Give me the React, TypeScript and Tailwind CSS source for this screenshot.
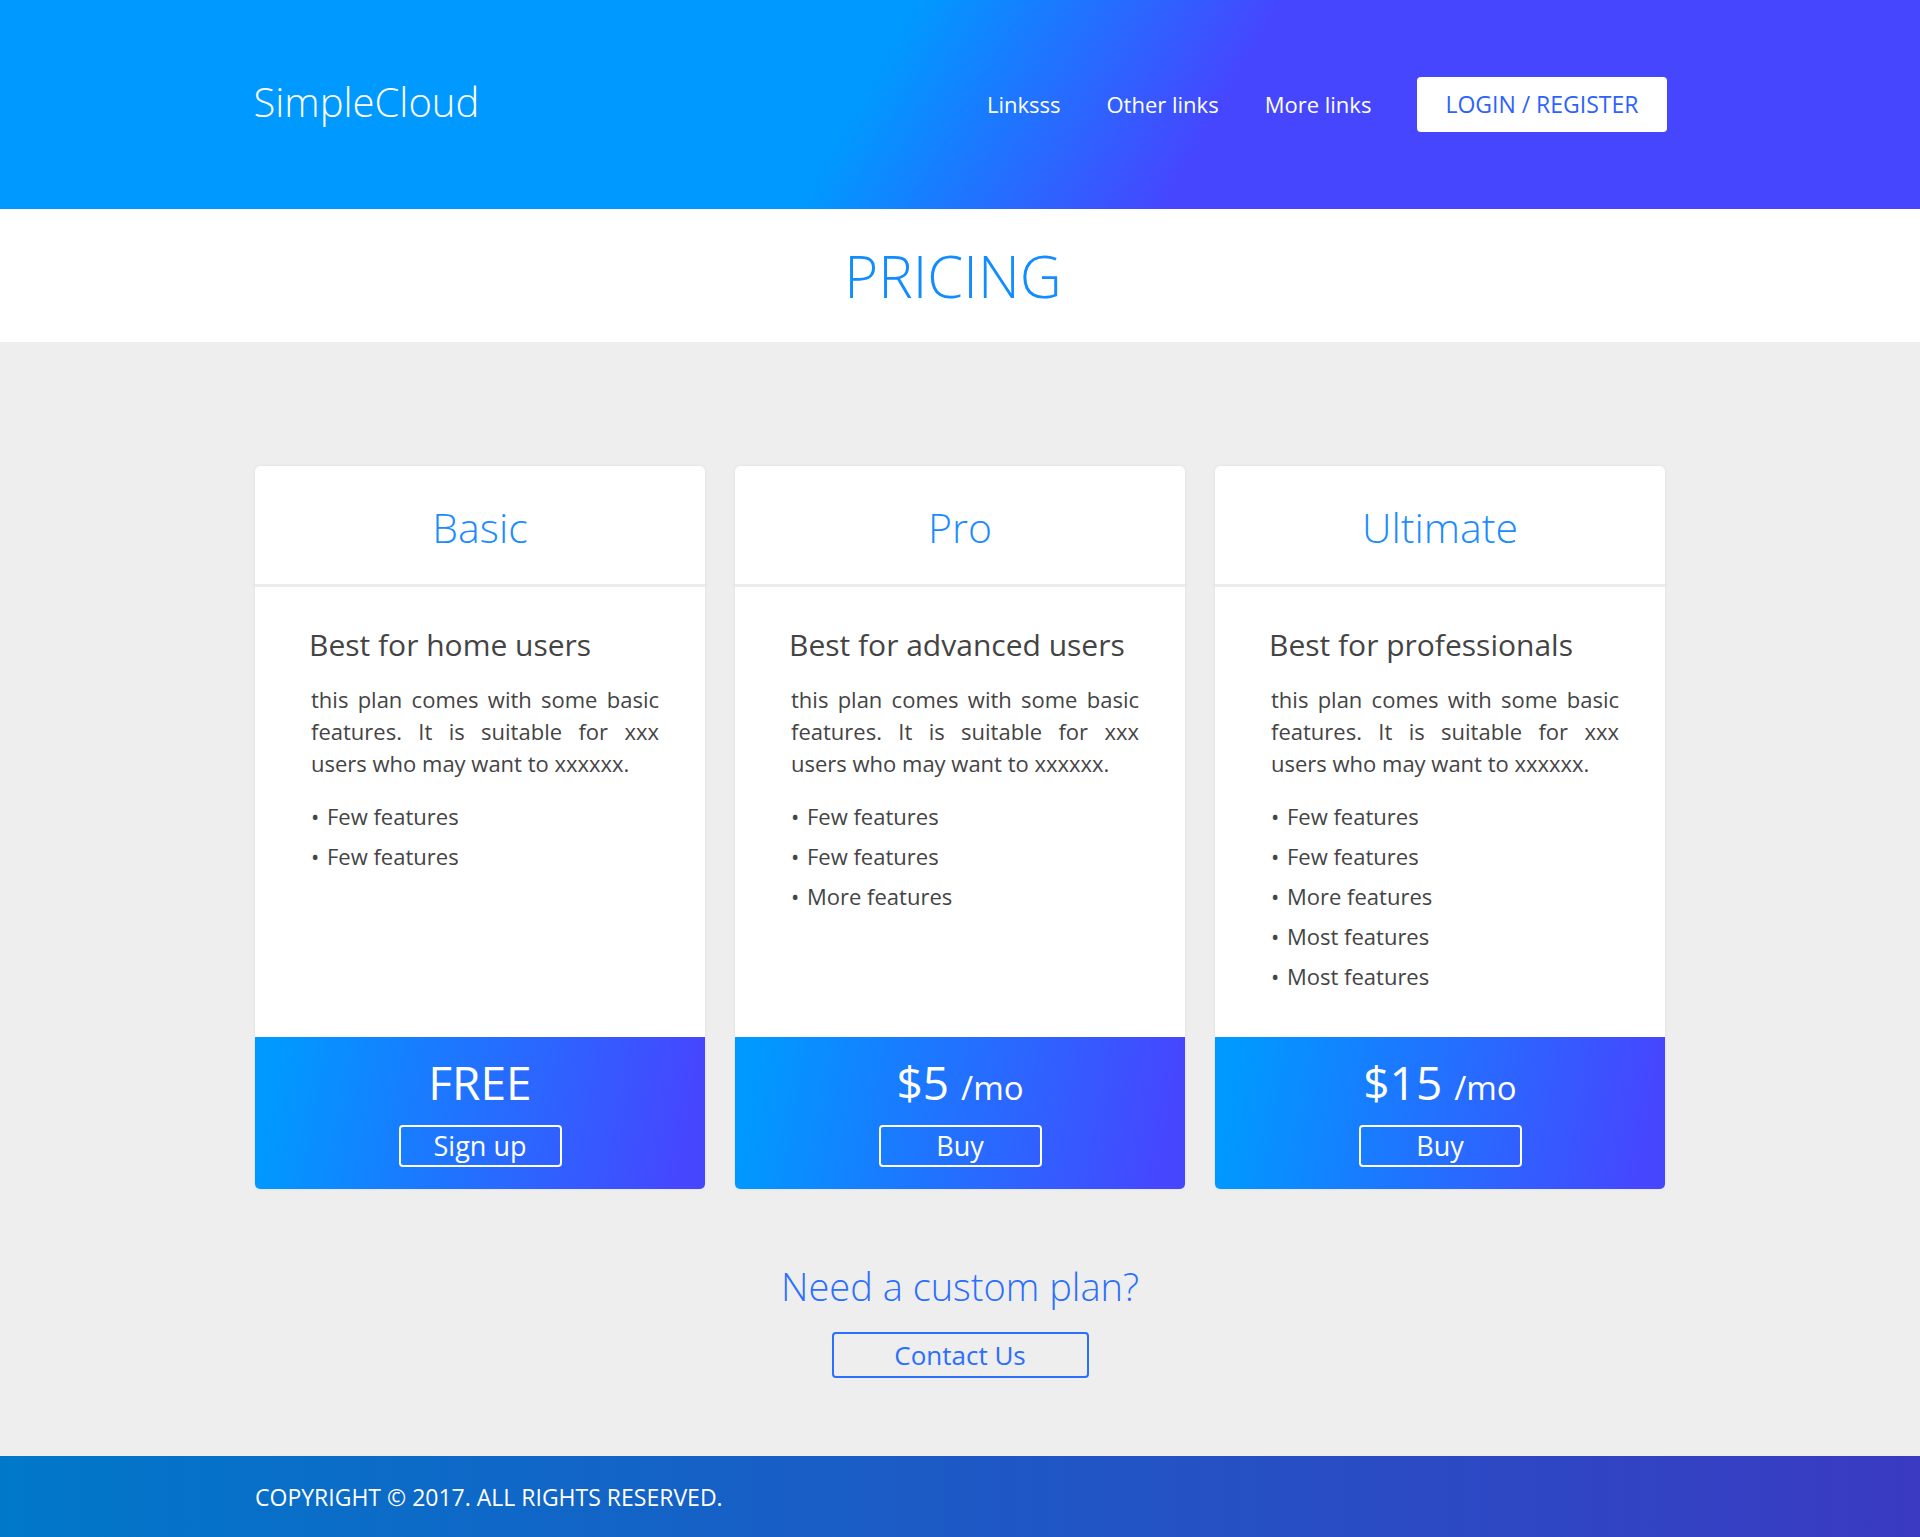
import React from 'react';

type Plan = {
  name: string;
  tagline: string;
  features: string[];
  price: string;
  unit?: string;
  action: string;
};

const plans: Plan[] = [
  {
    name: 'Basic',
    tagline: 'Best for home users',
    features: ['Few features', 'Few features'],
    price: 'FREE',
    action: 'Sign up',
  },
  {
    name: 'Pro',
    tagline: 'Best for advanced users',
    features: ['Few features', 'Few features', 'More features'],
    price: '$5',
    unit: '/mo',
    action: 'Buy',
  },
  {
    name: 'Ultimate',
    tagline: 'Best for professionals',
    features: ['Few features', 'Few features', 'More features', 'Most features', 'Most features'],
    price: '$15',
    unit: '/mo',
    action: 'Buy',
  },
];

const navLinks = ['Linksss', 'Other links', 'More links'];

const PlanCard = ({ plan }: { plan: Plan }) => (
  <div className="flex flex-col rounded-[5px] bg-white shadow-[0_0_3px_rgba(0,0,0,0.08)]">
    {/* Title */}
    <div className="flex h-[118px] items-center justify-center pt-[5px]">
      <h2 className="text-[41px] font-light text-[#1a8cff]">{plan.name}</h2>
    </div>

    {/* Body */}
    <div className="flex-1 border-t-[3px] border-[#ececec] pt-[38px] pr-[46px] pb-[41px] pl-[54px] text-[#444]">
      <h3 className="text-[30px] leading-[40px]">{plan.tagline}</h3>
      <p className="mt-[18px] pl-[2px] text-justify text-[22px] leading-[32px]">
        this plan comes with some basic features. It is suitable for xxx users who may want to xxxxxx.
      </p>
      <ul className="mt-[17px] pl-[2px] text-[22px] leading-[40px]">
        {plan.features.map((f, i) => (
          <li key={i} className="flex">
            <span className="w-[16px] text-[22px]">•</span>
            {f}
          </li>
        ))}
      </ul>
    </div>

    {/* Price */}
    <div className="flex h-[152px] flex-col items-center rounded-b-[5px] bg-[linear-gradient(100deg,#0099ff_5%,#4646ff_95%)] pt-[22px] text-white">
      <div className="flex h-[46px] items-baseline text-[46px] leading-[46px]">
        <span>{plan.price}</span>
        {plan.unit && <span className="ml-[12px] text-[33px] leading-[46px]">{plan.unit}</span>}
      </div>
      <button className="mt-[20px] flex h-[42px] w-[163px] items-center justify-center rounded-[4px] border-2 border-white text-[27px]">
        {plan.action}
      </button>
    </div>
  </div>
);

export default function App() {
  return (
    <div className="min-h-screen bg-[#eeeeee] font-['Open_Sans',sans-serif]">
      {/* Header */}
      <header className="h-[209px] bg-[linear-gradient(120deg,#0099ff_45%,#4646ff_63%)]">
        <div className="mx-auto flex h-full w-[1413px] items-center justify-between">
          <div className="-mt-[6px] text-[40px] font-light text-white">SimpleCloud</div>
          <nav className="flex items-center gap-[46px]">
            {navLinks.map((l) => (
              <a key={l} href="#" className="text-[22px] text-white">
                {l}
              </a>
            ))}
            <a
              href="#"
              className="flex h-[55px] items-center rounded-[4px] bg-white px-[28px] text-[23px] text-[#2d62ff]"
            >
              LOGIN / REGISTER
            </a>
          </nav>
        </div>
      </header>

      {/* Title */}
      <section className="flex h-[133px] items-center justify-center bg-white">
        <h1 className="mr-[14px] text-[58px] font-light text-[#118dff]">PRICING</h1>
      </section>

      {/* Plans */}
      <main className="pt-[124px] pb-[78px]">
        <div className="mx-auto grid w-[1410px] grid-cols-3 gap-[30px]">
          {plans.map((p) => (
            <PlanCard key={p.name} plan={p} />
          ))}
        </div>

        <div className="mt-[75px] flex flex-col items-center">
          <h2 className="text-[38px] leading-[44px] font-light text-[#2b6fff]">Need a custom plan?</h2>
          <button className="mt-[24px] flex h-[46px] w-[257px] items-center justify-center rounded-[4px] border-2 border-[#2b6fff] text-[26px] text-[#2b6fff]">
            Contact Us
          </button>
        </div>
      </main>

      {/* Footer */}
      <footer className="h-[82px] bg-[linear-gradient(90deg,#0078c9,#3a3ac2)]">
        <div className="mx-auto flex h-full w-[1410px] items-center text-[23px] text-white">
          COPYRIGHT © 2017. ALL RIGHTS RESERVED.
        </div>
      </footer>
    </div>
  );
}
